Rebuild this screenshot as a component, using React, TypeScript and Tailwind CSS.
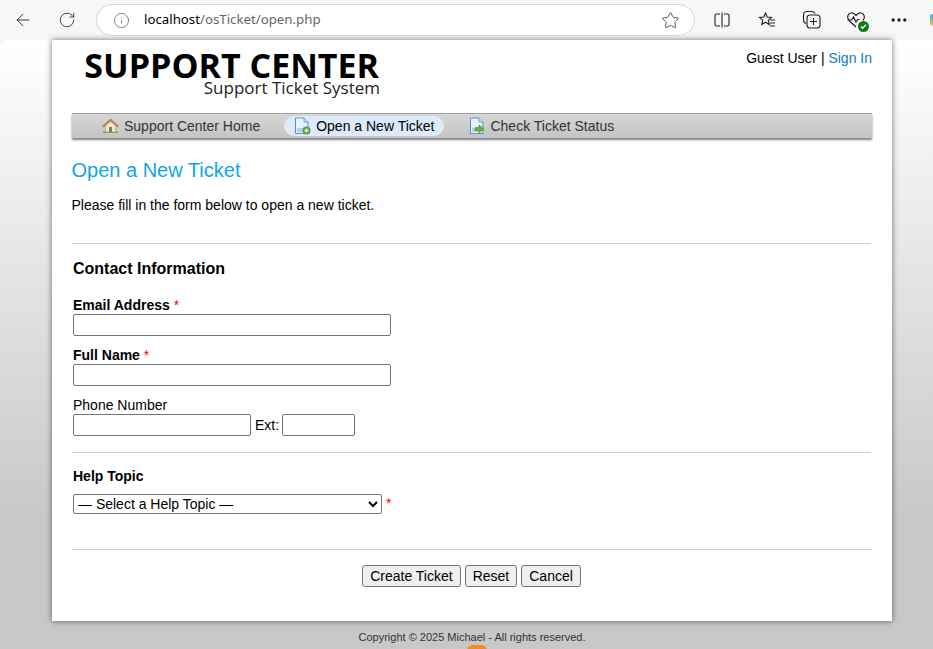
import { ArrowLeft, RotateCw, Info, Star, MoreHorizontal } from "lucide-react";

function HomeIcon() {
  return (
    <svg width="17" height="16" viewBox="0 0 17 16">
      <path d="M1 15h15v-1.500H1z" fill="#6da84a" />
      <path d="M3.500 7v7h10V7L8.500 3z" fill="#efe6d2" stroke="#a89878" strokeWidth="0.6" />
      <path d="M0.500 8L8.500 1l8 7-1.200 1L8.500 3.200 1.700 9z" fill="#c98a4a" stroke="#9c6430" strokeWidth="0.5" />
      <rect x="7" y="9" width="3" height="5" fill="#8a7a64" />
    </svg>
  );
}

function DocIcon({ arrow }: { arrow?: boolean }) {
  return (
    <svg width="17" height="18" viewBox="0 0 17 18">
      <path d="M1.500 1h8.500l4 4v11.500h-12.500z" fill="#e8f1fb" stroke="#5d8fc4" strokeWidth="1" />
      <path d="M10 1v4h4" fill="#cfe0f3" stroke="#5d8fc4" strokeWidth="0.8" />
      <path d="M3 12h6M3 14h6" stroke="#7fb0e0" strokeWidth="1" />
      {arrow ? (
        <path d="M6 10.500h4V8l5 4-5 4v-2.500H6z" fill="#6cab3e" stroke="#4a7f2a" strokeWidth="0.6" />
      ) : (
        <>
          <circle cx="12.500" cy="13.500" r="4" fill="#5c9e3c" />
          <path d="M10.500 13.500h4M12.500 11.500v4" stroke="#fff" strokeWidth="1.400" />
        </>
      )}
    </svg>
  );
}

function Divider() {
  return <hr className="border-0 border-t border-[#cfcfcf]" />;
}

function Required() {
  return <span className="font-normal text-[#ff0000]">*</span>;
}

function TextBox({ width }: { width: string }) {
  return (
    <input
      type="text"
      className={`${width} h-[22px] rounded-[2px] border border-[#767676] bg-white align-middle`}
    />
  );
}

function FormButton({ label }: { label: string }) {
  return (
    <button
      type="button"
      className="h-[22px] rounded-[3px] border border-[#767676] bg-[#efefef] px-[7px] text-[14px] leading-none text-black"
    >
      {label}
    </button>
  );
}

export default function App() {
  return (
    <div className="h-[649px] w-[933px] overflow-hidden bg-[#f7f7f7] font-['Liberation_Sans',Arial,sans-serif] text-[14px] text-black">
      {/* browser toolbar */}
      <div className="flex h-10 items-center [&>*]:shrink-0">
        <ArrowLeft size={20} strokeWidth={1.1} className="ml-[13px] text-[#222]" />
        <RotateCw size={18} strokeWidth={1.1} className="ml-[25px] text-[#222]" />
        <div className="ml-[20px] flex h-[32px] w-[599px] items-center rounded-full border border-[#d4d4d4] bg-white pl-[16px] pr-[14px]">
          <Info size={17} strokeWidth={1.1} className="text-[#666]" />
          <span className="ml-[14px] font-['Noto_Sans','Open_Sans',sans-serif] text-[13.250px] text-[#666]">
            <span className="text-black">localhost</span>/osTicket/open.php
          </span>
          <Star size={19} strokeWidth={1.1} className="ml-auto text-[#444]" />
        </div>
        {/* split screen */}
        <svg width="18" height="18" viewBox="0 0 18 18" fill="none" stroke="#222" strokeWidth="1.100" className="ml-[18px]">
          <path d="M7 3H3.500C2.500 3 2 3.500 2 4.500v9c0 1 .5 1.500 1.500 1.500H7" />
          <path d="M9 1.500v15" />
          <path d="M11 3h3.500c1 0 1.500.5 1.500 1.500v9c0 1-.5 1.500-1.500 1.500H11" />
        </svg>
        {/* favourites */}
        <svg width="18" height="18" viewBox="0 0 18 18" fill="none" stroke="#222" strokeWidth="1.100" className="ml-[27px]">
          <path d="M7.500 2l1.800 4 4.200.4-3.200 2.800 1 4.300-3.800-2.300-3.800 2.300 1-4.300L1.500 6.400 5.700 6z" />
          <path d="M12 9h5M12 12h5M12 15h5" />
        </svg>
        {/* collections */}
        <svg width="20" height="20" viewBox="0 0 20 20" fill="none" stroke="#222" strokeWidth="1.100" className="ml-[26px]">
          <path d="M4 13.500C2.500 13 1.500 12 1.500 10V5c0-2 1.500-3.500 3.500-3.500h5c1.500 0 2.500.5 3 2" />
          <rect x="5" y="5" width="13" height="13" rx="3" fill="#f7f7f7" />
          <path d="M11.500 8v7M8 11.500h7" />
        </svg>
        <div className="relative ml-[24px] h-5 w-5">
          <svg width="20" height="20" viewBox="0 0 20 20" fill="none" stroke="#222" strokeWidth="1.200">
            <path d="M10 17L3 10.500C.500 8 1.500 3.500 5 3c2-.3 3.500.7 5 2.500C11.500 3.700 13 2.700 15 3c3.500.5 4.500 5 2 7.500" />
            <path d="M1.500 10h4l2-3 2.500 5 1.500-2.500h2" />
          </svg>
          <span className="absolute bottom-[-2px] right-[-3px] flex h-[11px] w-[11px] items-center justify-center rounded-full bg-[#107c10]">
            <svg width="7" height="7" viewBox="0 0 7 7" fill="none" stroke="#fff" strokeWidth="1.300">
              <path d="M1 3.500l1.700 1.700L6 1.800" />
            </svg>
          </span>
        </div>
        <MoreHorizontal size={20} strokeWidth={2} className="ml-[23px] text-[#222]" />
        <div className="ml-[21px] h-[12px] w-[6px] rounded-l-[3px] bg-[linear-gradient(to_bottom,#4aa3e0,#e8c84a)]" />
      </div>

      {/* page */}
      <div className="h-[609px] rounded-tl-[8px] bg-[linear-gradient(to_bottom,#ffffff_0px,#c8c8c8_480px)]">
        <div className="ml-[52px] h-[581px] w-[840px] bg-white px-5 shadow-[0_0_6px_rgba(0,0,0,0.55)]">
          <header className="flex h-[73px] justify-between">
            <div className="ml-3 mt-[9px] flex w-[296px] flex-col items-end font-['Open_Sans',sans-serif]">
              <div className="mr-px whitespace-nowrap text-[34px] leading-[32px] font-bold text-black">SUPPORT CENTER</div>
              <div className="whitespace-nowrap text-[17px] leading-[14px] text-[#222]">Support Ticket System</div>
            </div>
            <p className="mt-[10px] leading-[16px]">
              Guest User | <a className="text-[#0a7cc4]">Sign In</a>
            </p>
          </header>

          <nav className="flex h-[25px] items-center border-t border-[#a0a0a0] bg-[linear-gradient(to_bottom,#d6d6d6,#c4c4c4)] pl-[30px] text-[#333] shadow-[0_2px_2px_rgba(0,0,0,0.5)]">
            <a className="flex items-center gap-[5px]">
              <HomeIcon />
              Support Center Home
            </a>
            <a className="ml-[24px] flex h-[20px] items-center gap-[5px] rounded-full bg-[#dceafb] pl-[10px] pr-[10px] text-black">
              <DocIcon />
              Open a New Ticket
            </a>
            <a className="ml-[25px] flex items-center gap-[4px]">
              <DocIcon arrow />
              Check Ticket Status
            </a>
          </nav>

          <h1 className="-ml-[0.5px] mt-[20px] text-[20px] leading-[24px] text-[#0ea5e9]">Open a New Ticket</h1>
          <p className="-ml-[0.5px] mt-[15px] leading-[16px]">Please fill in the form below to open a new ticket.</p>

          <div className="mt-[30px] w-[799px]">
            <Divider />
          </div>

          <form className="pl-px">
            <h2 className="mt-[16px] text-[16px] leading-[18px] font-bold">Contact Information</h2>

            <label className="mt-[19px] block leading-[16px] font-bold">
              Email Address <Required />
            </label>
            <TextBox width="mt-px block w-[318px]" />

            <label className="mt-[11px] block leading-[16px] font-bold">
              Full Name <Required />
            </label>
            <TextBox width="mt-px block w-[318px]" />

            <label className="mt-[11px] block leading-[16px]">Phone Number</label>
            <div className="mt-px flex items-center">
              <TextBox width="w-[178px]" />
              <span className="ml-[4px] mr-[3px]">Ext:</span>
              <TextBox width="w-[73px]" />
            </div>

            <div className="-ml-px mt-[16px] w-[799px]">
              <Divider />
            </div>

            <label className="mt-[15px] block leading-[16px] font-bold">Help Topic</label>
            <div className="mt-[9px] flex items-center gap-[4px]">
              <select className="h-[20px] w-[309px] rounded-[2px] border border-[#767676] bg-white text-[14px] appearance-auto">
                <option>— Select a Help Topic —</option>
              </select>
              <Required />
            </div>

            <div className="-ml-px mt-[35px]">
              <Divider />
            </div>

            <div className="-ml-[2px] mt-[15px] flex justify-center gap-1">
              <FormButton label="Create Ticket" />
              <FormButton label="Reset" />
              <FormButton label="Cancel" />
            </div>
          </form>
        </div>

        <footer className="ml-[52px] mt-[10px] w-[840px] text-center text-[11px] leading-[12px] text-[#333]">
          Copyright © 2025 Michael - All rights reserved.
        </footer>
        <div className="ml-[467px] mt-[2px] h-[6px] w-[20px] rounded-t-full bg-[#f58a1f]" />
      </div>
    </div>
  );
}
